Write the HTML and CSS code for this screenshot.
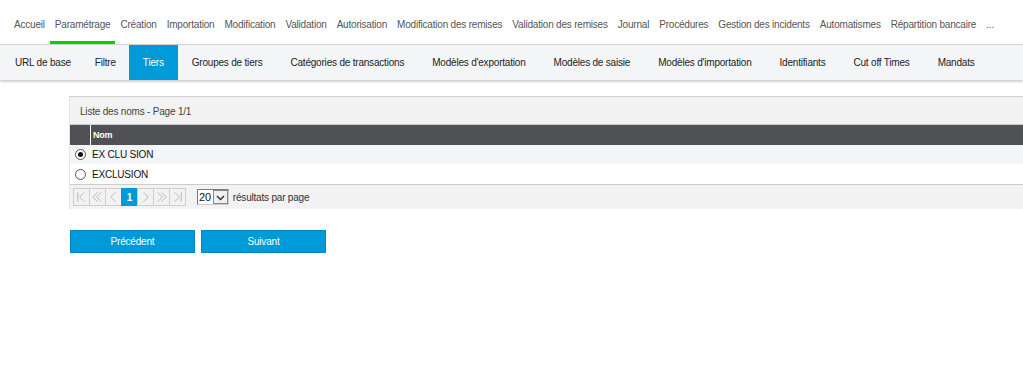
FILE: index.html
```html
<!DOCTYPE html>
<html lang="fr">
<head>
    <meta charset="UTF-8">
    <title>Paramétrage - Tiers</title>
    <link rel="stylesheet" href="styles.css">
</head>
<body>

<div class="topnav">
    <a href="#">Accueil</a>
    <a href="#" class="current">Paramétrage</a>
    <a href="#">Création</a>
    <a href="#">Importation</a>
    <a href="#">Modification</a>
    <a href="#">Validation</a>
    <a href="#">Autorisation</a>
    <a href="#">Modification des remises</a>
    <a href="#">Validation des remises</a>
    <a href="#">Journal</a>
    <a href="#">Procédures</a>
    <a href="#">Gestion des incidents</a>
    <a href="#">Automatismes</a>
    <a href="#">Répartition bancaire</a>
    <a href="#">...</a>
</div>

<div class="subnav">
    <a href="#">URL de base</a>
    <a href="#" class="tight">Filtre</a>
    <a href="#" class="active">Tiers</a>
    <a href="#">Groupes de tiers</a>
    <a href="#">Catégories de transactions</a>
    <a href="#">Modèles d'exportation</a>
    <a href="#">Modèles de saisie</a>
    <a href="#">Modèles d'importation</a>
    <a href="#">Identifiants</a>
    <a href="#">Cut off Times</a>
    <a href="#">Mandats</a>
</div>

<div class="content">
    <div class="panel">
        <div class="panel-title">Liste des noms - Page 1/1</div>
        <div class="grid-head">
            <div class="sel-col"></div>
            <div class="name-col">Nom</div>
        </div>
        <div class="grid-row odd">
            <span class="radio checked"></span>
            <span>EX CLU SION</span>
        </div>
        <div class="grid-row">
            <span class="radio"></span>
            <span>EXCLUSION</span>
        </div>
        <div class="pager">
            <div class="pages">
                <span class="pg"><svg width="16" height="16" viewBox="0 0 16 16"><path d="M4 3v10M11 3l-5 5 5 5" fill="none" stroke="#b5b5b5" stroke-width="1"/></svg></span>
                <span class="pg"><svg width="16" height="16" viewBox="0 0 16 16"><path d="M8 3l-5 5 5 5M12 3l-5 5 5 5" fill="none" stroke="#b5b5b5" stroke-width="1"/></svg></span>
                <span class="pg"><svg width="16" height="16" viewBox="0 0 16 16"><path d="M10 3l-5 5 5 5" fill="none" stroke="#b5b5b5" stroke-width="1"/></svg></span>
                <span class="pg on">1</span>
                <span class="pg"><svg width="16" height="16" viewBox="0 0 16 16"><path d="M6 3l5 5-5 5" fill="none" stroke="#b5b5b5" stroke-width="1"/></svg></span>
                <span class="pg"><svg width="16" height="16" viewBox="0 0 16 16"><path d="M4 3l5 5-5 5M8 3l5 5-5 5" fill="none" stroke="#b5b5b5" stroke-width="1"/></svg></span>
                <span class="pg"><svg width="16" height="16" viewBox="0 0 16 16"><path d="M5 3l5 5-5 5M12 3v10" fill="none" stroke="#b5b5b5" stroke-width="1"/></svg></span>
            </div>
            <div class="per-page">
                <span class="num">20</span>
                <span class="drop"><svg width="11" height="11" viewBox="0 0 11 11"><path d="M2 4l3.5 3.5L9 4" fill="none" stroke="#333" stroke-width="1.5"/></svg></span>
            </div>
            <span class="per-label">résultats par page</span>
        </div>
    </div>

    <div class="actions">
        <button type="button">Précédent</button>
        <button type="button">Suivant</button>
    </div>
</div>

</body>
</html>
```

FILE: styles.css
```css
body {
    margin: 0;
    padding: 0;
    font-family: "Liberation Sans", Arial, sans-serif;
    font-size: 10px;
    letter-spacing: -0.2px;
    color: #333;
    background-color: white;
}
a {
    text-decoration: none;
    color: #333;
}

/* main menu */
.topnav {
    display: flex;
    height: 44px;
    padding-left: 9px;
    border-bottom: 1px solid #d2d2d2;
}
.topnav a {
    display: flex;
    align-items: center;
    padding: 0 5px;
    padding-top: 8px;
    white-space: nowrap;
    color: #555;
    border-bottom: 3px solid transparent;
}
.topnav a.current {
    border-bottom-color: #00d300;
}

/* sub menu */
.subnav {
    display: flex;
    height: 35px;
    background-color: #f4f5f7;
    box-shadow: 0 2px 2px rgba(0, 0, 0, 0.18);
}
.subnav a {
    display: flex;
    align-items: center;
    padding: 0 14px;
    white-space: nowrap;
    color: #222;
}
.subnav a:first-child {
    padding-left: 15px;
    padding-right: 12px;
}
.subnav a.tight {
    padding: 0 13px 0 12px;
}
.subnav a.active {
    background-color: #009ad8;
    color: white;
}

.content {
    padding: 16px 0 0 69px;
}
.panel {
    border-top: 1px solid #cfcfcf;
    border-left: 1px solid #e4e4e4;
}
.panel-title {
    height: 27px;
    line-height: 29px;
    padding-left: 10px;
    background-color: #f1f2f1;
    border-bottom: 1px solid #c9c9c9;
    color: #444;
}
.grid-head {
    display: flex;
    height: 20px;
    background-color: #505155;
    color: white;
    font-weight: bold;
    font-size: 9px;
}
.sel-col {
    width: 20px;
    border-right: 1px solid white;
}
.name-col {
    padding-left: 2px;
    line-height: 20px;
}
.grid-row {
    display: flex;
    align-items: center;
    height: 19px;
    gap: 6px;
    padding-left: 5px;
    color: #111;
    background-color: white;
}
.grid-row.odd {
    background-color: #f4f5f7;
}
.grid-row + .grid-row {
    height: 20px;
}
.radio {
    width: 9px;
    height: 9px;
    border: 1px solid #555;
    border-radius: 50%;
    background-color: white;
    position: relative;
}
.radio.checked::after {
    content: "";
    position: absolute;
    left: 2px;
    top: 2px;
    width: 5px;
    height: 5px;
    border-radius: 50%;
    background-color: #111;
}
.pager {
    display: flex;
    align-items: center;
    height: 24px;
    padding-left: 3px;
    background-color: #f1f2f1;
    border-top: 1px solid #cbcbcb;
}
.pages {
    display: flex;
}
.pg {
    display: flex;
    align-items: center;
    justify-content: center;
    width: 15px;
    height: 16px;
    border: 1px solid #cfcfcf;
    margin-right: -1px;
    background-color: #f1f2f1;
}
.pg.on {
    background-color: #009ad8;
    border-color: #009ad8;
    color: white;
    font-weight: bold;
    font-size: 10px;
}
.per-page {
    display: flex;
    align-items: center;
    margin-left: 12px;
    height: 14px;
    border: 1px solid #7a7a7a;
    border-right-color: #ccc;
    border-bottom-color: #ccc;
    background-color: white;
}
.per-page .num {
    padding: 0 2px 0 1px;
    font-size: 11px;
    color: #111;
}
.per-page .drop {
    display: flex;
    align-items: center;
    justify-content: center;
    width: 13px;
    height: 12px;
    border: 1px solid #888;
    background-color: #f0f0f0;
}
.per-label {
    margin-left: 4px;
    color: #333;
}

.actions {
    display: flex;
    gap: 6px;
    margin-top: 21px;
    padding-left: 1px;
}
.actions button {
    width: 125px;
    height: 23px;
    background-color: #009ad8;
    border: 1px solid #0086bf;
    color: white;
    font-family: "Liberation Sans", Arial, sans-serif;
    font-size: 10px;
    letter-spacing: -0.2px;
    cursor: pointer;
}
```
